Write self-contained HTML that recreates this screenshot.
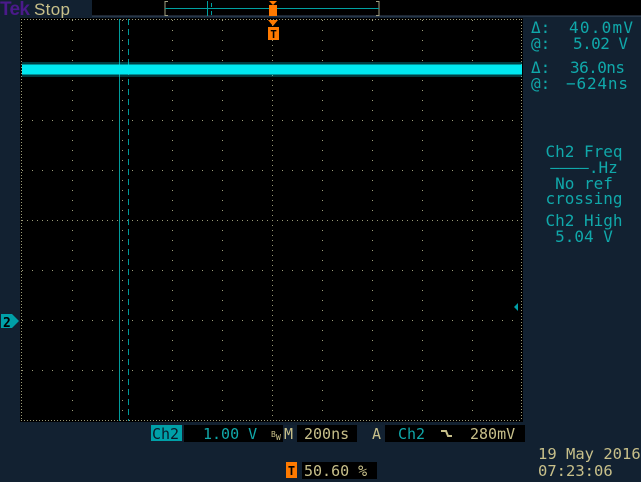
<!DOCTYPE html>
<html><head><style>
body{margin:0;width:641px;height:482px;background:#122131;overflow:hidden;font-family:"DejaVu Sans Mono","Liberation Mono",monospace;}
svg{position:absolute;left:0;top:0}
</style></head><body>
<svg width="641" height="482" xmlns="http://www.w3.org/2000/svg" font-family="DejaVu Sans Mono, Liberation Mono, monospace">
<rect width="641" height="482" fill="#122131"/>
<!-- header -->
<text x="0" y="15" fill="#4a1a8a" font-size="19" font-weight="bold" font-family="Liberation Sans, sans-serif" textLength="30">Tek</text>
<text x="34" y="15" fill="#c8c08a" font-size="17" font-family="Liberation Sans, sans-serif" textLength="36">Stop</text>
<rect x="92" y="0" width="549" height="16" fill="#000"/>
<line x1="92" y1="16" x2="641" y2="16" stroke="#3a4a60" stroke-width="1"/>
<path d="M168,1.5 H165 V15.5 H168 M376,1.5 H379 V15.5 H376" stroke="#a0a080" fill="none"/>
<line x1="165" y1="8.5" x2="379" y2="8.5" stroke="#00a0a0"/>
<line x1="207.5" y1="1" x2="207.5" y2="16" stroke="#00a0a0"/>
<line x1="211.5" y1="3" x2="211.5" y2="7" stroke="#00a0a0"/><line x1="211.5" y1="11" x2="211.5" y2="15" stroke="#00a0a0"/>
<rect x="269" y="5" width="8" height="11" fill="#ff7a00"/>
<path d="M269,1 H277 L273,5Z" fill="#ff7a00"/>
<!-- graticule -->
<rect x="20" y="18" width="503" height="404" fill="#000"/>
<g stroke="#9a9a78" stroke-width="1" stroke-dasharray="1 9">
<line x1="72.5" y1="20" x2="72.5" y2="420"/><line x1="122.5" y1="20" x2="122.5" y2="420"/>
<line x1="172.5" y1="20" x2="172.5" y2="420"/><line x1="222.5" y1="20" x2="222.5" y2="420"/>
<line x1="322.5" y1="20" x2="322.5" y2="420"/><line x1="372.5" y1="20" x2="372.5" y2="420"/>
<line x1="422.5" y1="20" x2="422.5" y2="420"/><line x1="472.5" y1="20" x2="472.5" y2="420"/>
<line x1="22" y1="70.5" x2="522" y2="70.5"/><line x1="22" y1="120.5" x2="522" y2="120.5"/>
<line x1="22" y1="170.5" x2="522" y2="170.5"/><line x1="22" y1="270.5" x2="522" y2="270.5"/>
<line x1="22" y1="320.5" x2="522" y2="320.5"/><line x1="22" y1="370.5" x2="522" y2="370.5"/>
</g>
<g stroke="#9a9a78" stroke-width="1" stroke-dasharray="1 4">
<line x1="272.5" y1="20" x2="272.5" y2="420"/><line x1="22" y1="220.5" x2="522" y2="220.5"/>
</g>
<g stroke="#9a9a78" stroke-width="1" stroke-dasharray="1 2">
<line x1="21.5" y1="19" x2="21.5" y2="421"/><line x1="521.5" y1="19" x2="521.5" y2="421"/>
<line x1="21" y1="19.5" x2="522" y2="19.5"/><line x1="21" y1="420.5" x2="522" y2="420.5"/>
</g>
<!-- cursors -->
<line x1="119.5" y1="19" x2="119.5" y2="421" stroke="#009a9a"/>
<line x1="128.5" y1="19" x2="128.5" y2="421" stroke="#009a9a" stroke-dasharray="6 4"/>
<!-- trace -->
<rect x="22" y="62" width="500" height="15" fill="#00c8d0" opacity="0.3"/>
<rect x="22" y="64.5" width="500" height="10" fill="#00e8f0"/>
<!-- trigger marker -->
<path d="M268,20 H278 L273,26Z" fill="#ff7a00"/>
<rect x="268" y="27" width="11" height="13" fill="#ff7a00"/>
<text x="273.5" y="38" fill="#000" font-size="11" font-weight="bold" text-anchor="middle">T</text>
<!-- ch2 marker -->
<path d="M1,314 H12 L19,321 L12,328 H1Z" fill="#00a0a8"/>
<text x="3" y="327" fill="#000" font-size="13" font-weight="bold">2</text>
<path d="M518,303 L514,307 L518,311Z" fill="#00a0a8"/>
<!-- right panel -->
<g fill="#10a8aa" font-size="16">
<text x="531" y="33">Δ:</text><text x="633" y="33" text-anchor="end" textLength="64">40.0mV</text>
<text x="531" y="49">@:</text><text x="628" y="49" text-anchor="end" textLength="55">5.02 V</text>
<text x="531" y="73">Δ:</text><text x="625" y="73" text-anchor="end" textLength="55">36.0ns</text>
<text x="531" y="89">@:</text><text x="628" y="89" text-anchor="end" textLength="62">−624ns</text>
<text x="584" y="157" text-anchor="middle">Ch2 Freq</text>
<text x="584" y="173" text-anchor="middle">––––.Hz</text>
<text x="584" y="189" text-anchor="middle">No ref</text>
<text x="584" y="204" text-anchor="middle">crossing</text>
<text x="584" y="226" text-anchor="middle">Ch2 High</text>
<text x="584" y="242" text-anchor="middle">5.04 V</text>
</g>
<!-- bottom -->
<rect x="151" y="425" width="31" height="16" fill="#00a0a8"/>
<text x="152" y="439" fill="#0a1a28" font-size="15">Ch2</text>
<rect x="184" y="425" width="99" height="17" fill="#000"/>
<text x="203" y="439" fill="#10a8aa" font-size="15">1.00 V</text>
<text x="271" y="437" fill="#c8c08a" font-size="8">B</text><text x="276" y="440" fill="#c8c08a" font-size="8">W</text>
<text x="284" y="439" fill="#c8c08a" font-size="15">M</text>
<rect x="297" y="425" width="60" height="17" fill="#000"/>
<text x="304" y="439" fill="#c8c08a" font-size="15">200ns</text>
<text x="372" y="439" fill="#c8c08a" font-size="15">A</text>
<rect x="385" y="425" width="140" height="17" fill="#000"/>
<text x="398" y="439" fill="#10a8aa" font-size="15">Ch2</text>
<path d="M441,431 H446 L448,436 H452" stroke="#c8c08a" stroke-width="2" fill="none"/>
<text x="470" y="439" fill="#c8c08a" font-size="15">280mV</text>
<rect x="286" y="462" width="11" height="16" fill="#ff7a00"/>
<text x="291.5" y="475" fill="#000" font-size="12" font-weight="bold" text-anchor="middle">T</text>
<rect x="302" y="462" width="75" height="17" fill="#000"/>
<text x="304" y="476" fill="#c8c08a" font-size="15">50.60 %</text>
<text x="538" y="459" fill="#c8c08a" font-size="15.5">19 May 2016</text>
<text x="538" y="476" fill="#c8c08a" font-size="15.5">07:23:06</text>
</svg>
</body></html>
